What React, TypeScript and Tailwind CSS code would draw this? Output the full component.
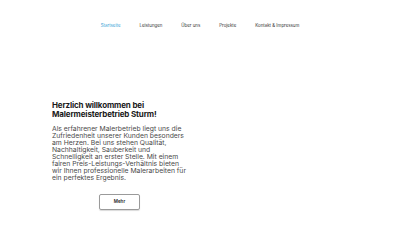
const links = ["Startseite", "Leistungen", "Über uns", "Projekte", "Kontakt & Impressum"];

export default function App() {
  return (
    <div className="h-[250px] w-[400px] bg-white font-['Inter',sans-serif]">
      <nav className="flex justify-center gap-[19px] pt-[23px] text-[4.4px] leading-[6px] text-[#333]">
        {links.map((label, i) => (
          <a key={label} className={i === 0 ? "text-[#3a9fd6]" : ""}>
            {label}
          </a>
        ))}
      </nav>

      <section className="ml-[52px] mt-[72px] flex w-[136px] flex-col">
        <h1 className="text-[8px] font-bold leading-[8.5px] tracking-[-0.15px] text-[#1a1a1a]">
          Herzlich willkommen bei
          <br />
          Malermeisterbetrieb Sturm!
        </h1>
        <p className="mt-[7px] text-[6.8px] leading-[7px] text-[#4a4a4a]">
          Als erfahrener Malerbetrieb liegt uns die Zufriedenheit unserer Kunden besonders am Herzen. Bei uns stehen
          Qualität, Nachhaltigkeit, Sauberkeit und Schnelligkeit an erster Stelle. Mit einem fairen
          Preis-Leistungs-Verhältnis bieten wir Ihnen professionelle Malerarbeiten für ein perfektes Ergebnis.
        </p>
        <button className="ml-[47px] mt-[13px] flex h-[16px] w-[41px] items-center justify-center rounded-[2px] border border-[#9a9a9a] text-[4.5px] font-semibold text-[#222] shadow-[0_1px_1px_rgba(0,0,0,0.15)]">
          Mehr
        </button>
      </section>
    </div>
  );
}
